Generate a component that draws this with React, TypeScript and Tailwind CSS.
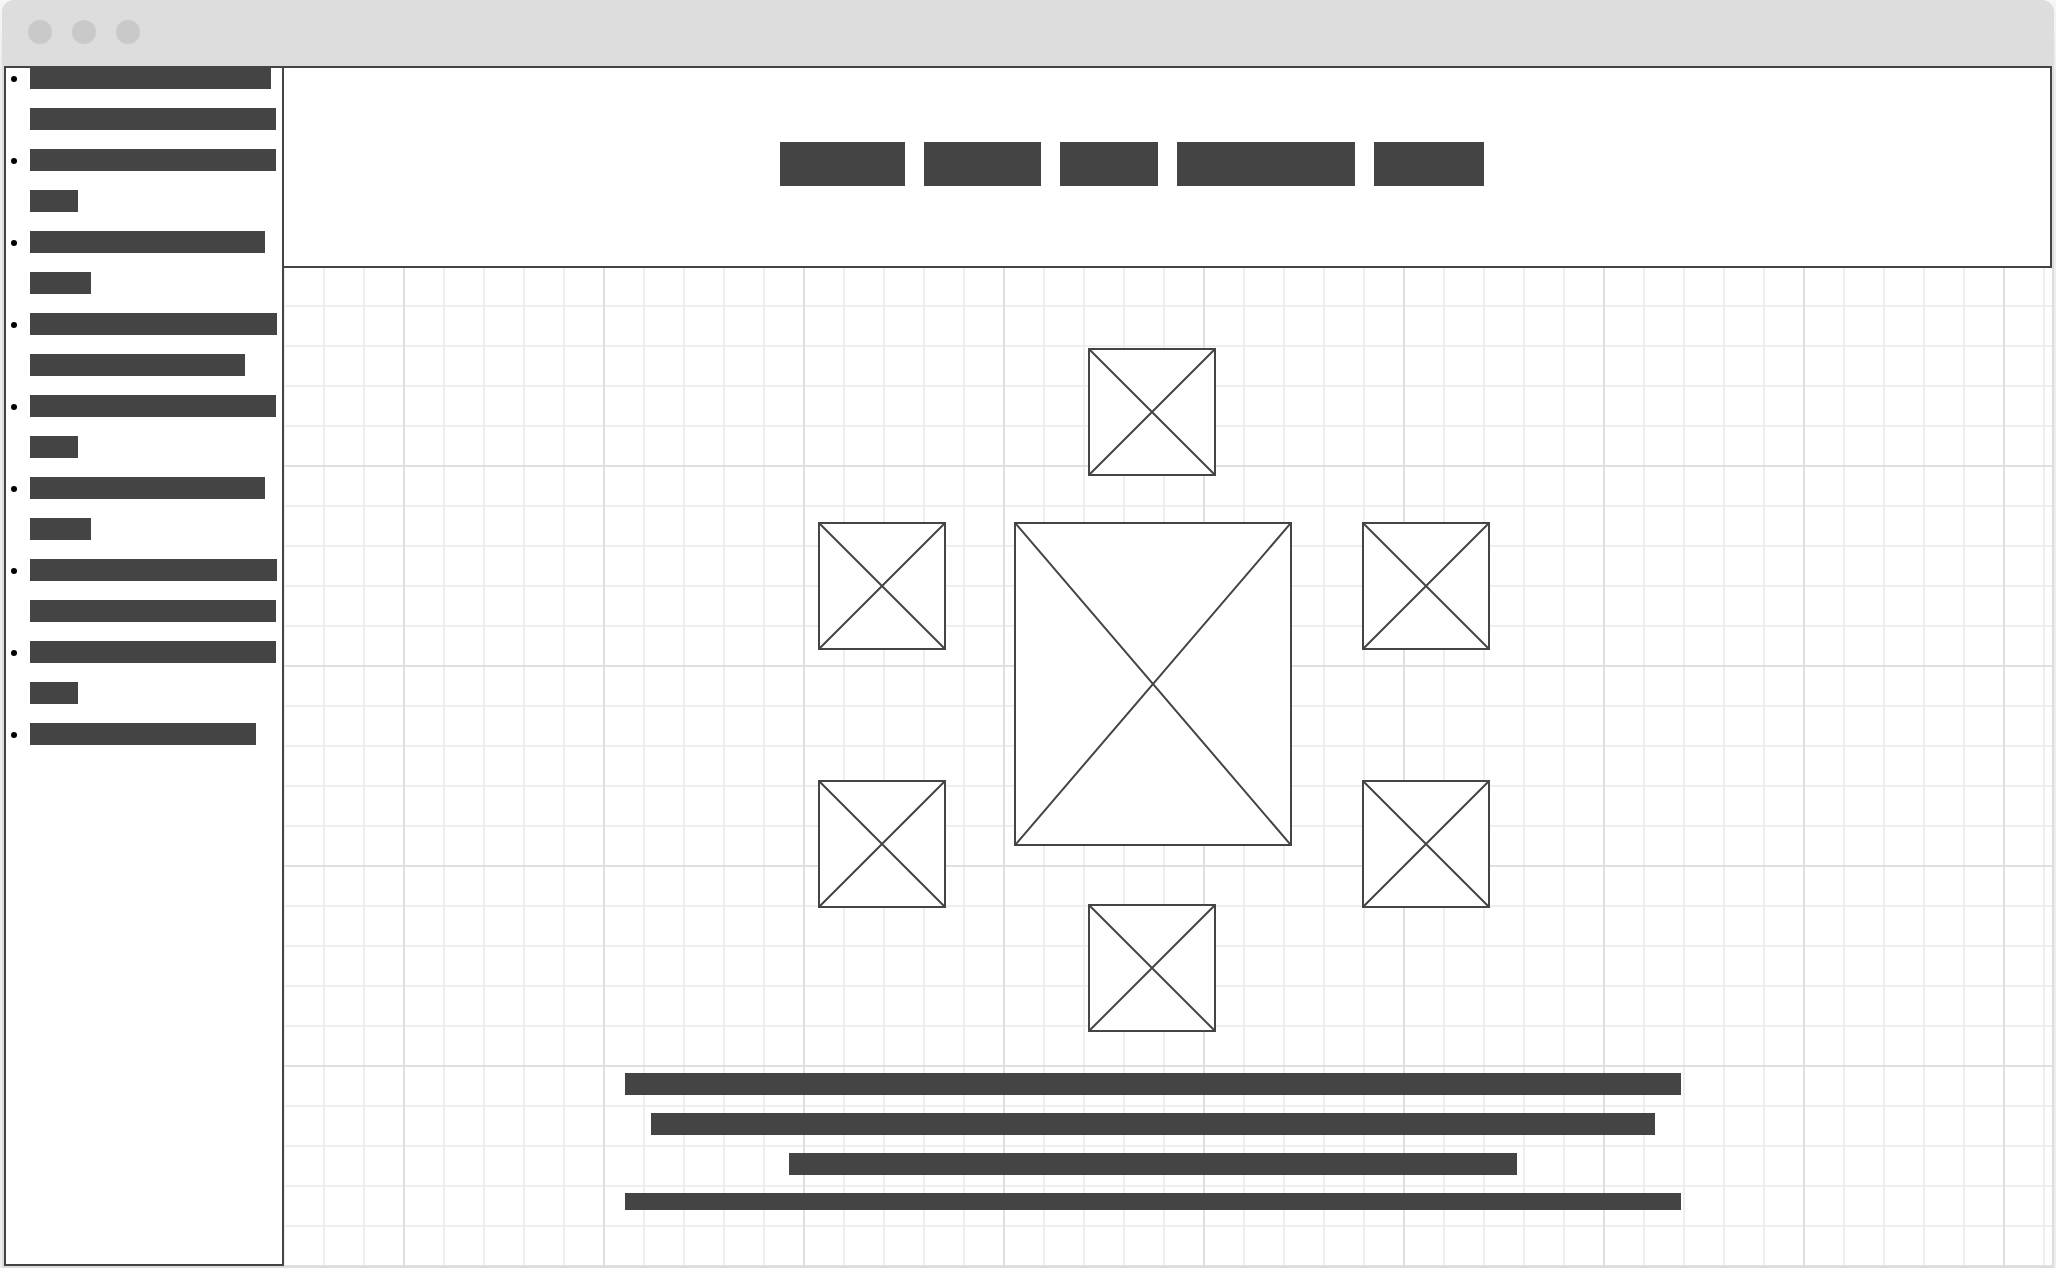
type BoxProps = { className: string };

const dots = ["close", "minimise", "zoom"];

const sidebarItems: string[][] = [
  ["w-[241px]", "w-[246px]"],
  ["w-[246px]", "w-12"],
  ["w-[235px]", "w-[61px]"],
  ["w-[247px]", "w-[215px]"],
  ["w-[246px]", "w-12"],
  ["w-[235px]", "w-[61px]"],
  ["w-[247px]", "w-[246px]"],
  ["w-[246px]", "w-12"],
  ["w-[226px]"],
];

const navItems = ["w-[125px]", "w-[117px]", "w-[98px]", "w-[178px]", "w-[110px]"];

const paragraphLines = [
  "h-[22px] w-full",
  "h-[22px] w-[1004px]",
  "h-[22px] w-[728px]",
  "h-[17px] w-full",
];

/* White frame with two diagonals: an image placeholder. */
function ImageBox({ className }: BoxProps) {
  return (
    <div className={`shrink-0 border-2 border-[#444] bg-white ${className}`}>
      <svg className="block h-full w-full" viewBox="0 0 100 100" preserveAspectRatio="none" aria-hidden="true">
        <path d="M0 0L100 100M100 0L0 100" fill="none" stroke="#444" strokeWidth="2" vectorEffect="non-scaling-stroke" />
      </svg>
    </div>
  );
}

function TitleBar() {
  return (
    <div className="flex h-[66px] shrink-0 gap-5 rounded-t-xl bg-[#ddd] px-[26px] pt-5">
      {dots.map((dot) => (
        <span key={dot} className="size-6 rounded-full bg-[#c9c9c9]" />
      ))}
    </div>
  );
}

function Sidebar() {
  return (
    <aside className="w-[280px] shrink-0 border-2 border-[#444] bg-white">
      <ul className="-mt-px flex flex-col gap-[19px] pl-[5px]">
        {sidebarItems.map((lines, i) => (
          <li key={i} className="flex gap-[13px]">
            <span className="mt-[9px] size-1.5 shrink-0 rounded-full bg-black" />
            <div className="flex flex-col gap-[19px]">
              {lines.map((width, j) => (
                <span key={j} className={`block h-[22px] bg-[#444] ${width}`} />
              ))}
            </div>
          </li>
        ))}
      </ul>
    </aside>
  );
}

function Header() {
  return (
    <header className="h-[202px] shrink-0 border-y-2 border-r-2 border-[#444] bg-white pt-[74px] pr-[70px]">
      <nav className="flex justify-center gap-[19px]">
        {navItems.map((width, i) => (
          <a key={i} href="#" className={`block h-11 bg-[#444] ${width}`} />
        ))}
      </nav>
    </header>
  );
}

function Gallery() {
  return (
    <section className="flex items-start justify-center pr-7">
      <div className="mt-[174px] mr-[68px] flex flex-col gap-[130px]">
        <ImageBox className="size-32" />
        <ImageBox className="size-32" />
      </div>
      <div className="flex flex-col">
        <ImageBox className="ml-[74px] size-32" />
        <ImageBox className="mt-[46px] h-[324px] w-[278px]" />
        <ImageBox className="mt-[58px] ml-[74px] size-32" />
      </div>
      <div className="mt-[174px] ml-[70px] flex flex-col gap-[130px]">
        <ImageBox className="size-32" />
        <ImageBox className="size-32" />
      </div>
    </section>
  );
}

function Paragraph() {
  return (
    <section className="mt-[41px] flex justify-center pr-[30px]">
      <div className="flex w-[1056px] flex-col items-center gap-[18px]">
        {paragraphLines.map((size, i) => (
          <span key={i} className={`block bg-[#444] ${size}`} />
        ))}
      </div>
    </section>
  );
}

export default function App() {
  return (
    <div className="flex min-h-screen flex-col bg-linear-to-b from-[#f6f6f6] from-0% via-[#eee] via-5% to-[#eee] px-0.5">
      <TitleBar />
      <div className="flex grow border-x-2 border-b-2 border-[#ddd] bg-white bg-[linear-gradient(#e0e0e0_2px,transparent_2px),linear-gradient(90deg,#e0e0e0_2px,transparent_2px),linear-gradient(#eee_2px,transparent_2px),linear-gradient(90deg,#eee_2px,transparent_2px)] bg-size-[200px_200px,200px_200px,40px_40px,40px_40px] bg-position-[-1px_-1px]">
        <Sidebar />
        <div className="flex min-w-0 grow flex-col">
          <Header />
          <main className="grow pt-20">
            <Gallery />
            <Paragraph />
          </main>
        </div>
      </div>
    </div>
  );
}
